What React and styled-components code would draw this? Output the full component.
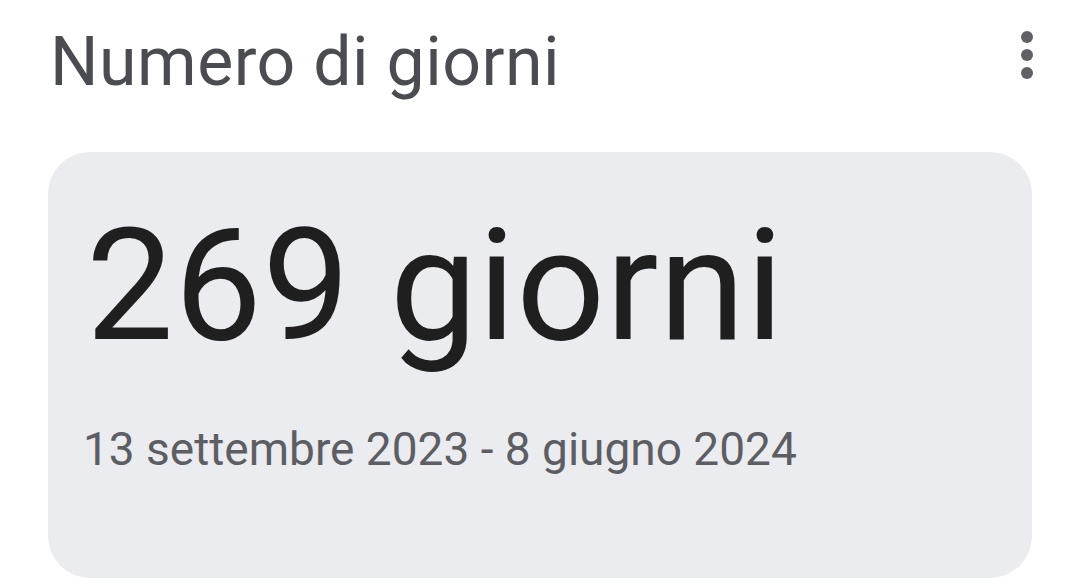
import styled, { createGlobalStyle } from 'styled-components';

const GlobalStyle = createGlobalStyle`
  html, body {
    margin: 0;
    padding: 0;
    background: #fff;
  }
`;

const Page = styled.div`
  width: 1080px;
  height: 585px;
  overflow: hidden;
  box-sizing: border-box;
  padding: 0 48px;
  font-family: Roboto, 'Liberation Sans', sans-serif;
`;

const Header = styled.div`
  display: flex;
  align-items: center;
  justify-content: space-between;
  height: 120px;
`;

const Title = styled.h1`
  margin: 4px 0 0 2px;
  font-size: 68px;
  font-weight: 400;
  color: #4a4c51;
  letter-spacing: 0.5px;
`;

const MenuButton = styled.div`
  display: flex;
  flex-direction: column;
  gap: 6px;
  margin-right: -1px;
  margin-bottom: 10px;
`;

const Dot = styled.span`
  width: 12px;
  height: 12px;
  border-radius: 50%;
  background: #5f6166;
`;

const Card = styled.div`
  margin-top: 32px;
  height: 426px;
  border-radius: 42px;
  background: #ebecef;
  box-sizing: border-box;
  padding: 56px 40px 0 38px;
`;

const Value = styled.div`
  font-size: 156px;
  line-height: 1;
  color: #1f1f1f;
  letter-spacing: 0.5px;
`;

const Range = styled.div`
  margin-top: 58px;
  margin-left: -3px;
  font-size: 46px;
  color: #5c5e63;
`;

const App = () => (
  <>
    <GlobalStyle />
    <Page>
      <Header>
        <Title>Numero di giorni</Title>
        <MenuButton>
          <Dot />
          <Dot />
          <Dot />
        </MenuButton>
      </Header>
      <Card>
        <Value>269 giorni</Value>
        <Range>13 settembre 2023 - 8 giugno 2024</Range>
      </Card>
    </Page>
  </>
);

export default App;
